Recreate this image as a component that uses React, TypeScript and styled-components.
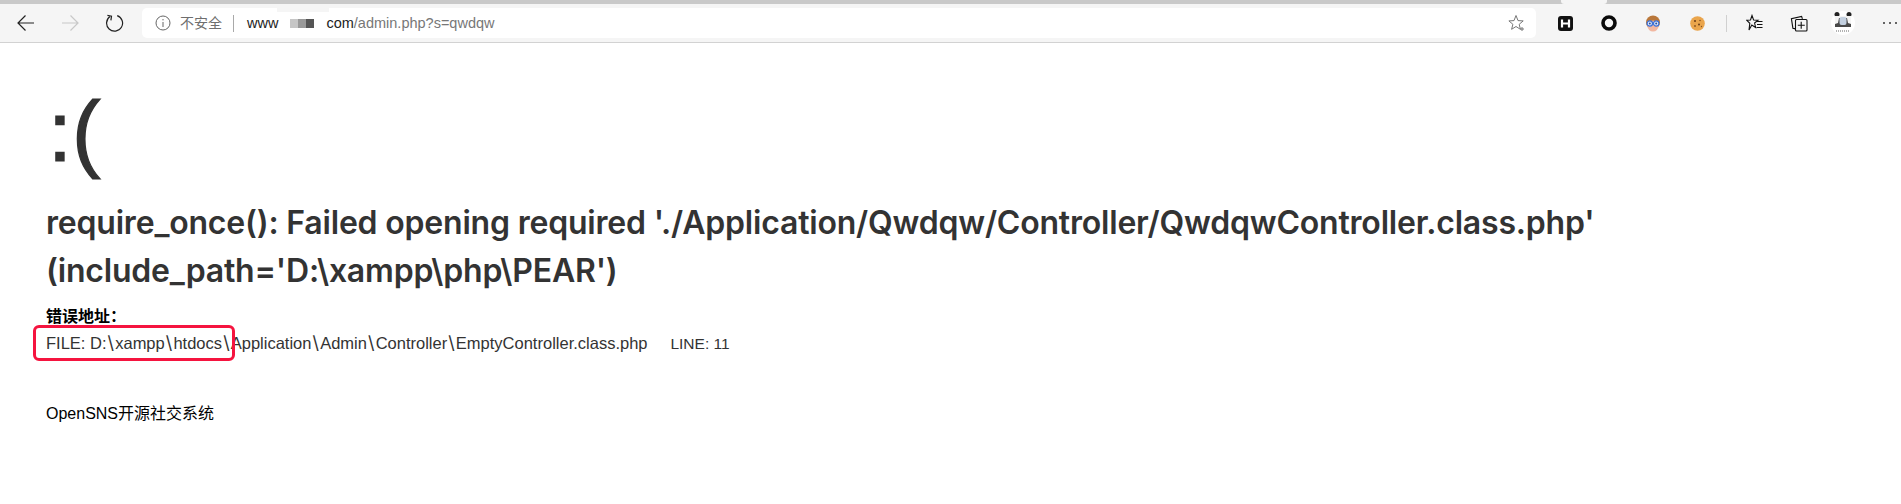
import React from 'react';
import styled, { createGlobalStyle } from 'styled-components';

const Global = createGlobalStyle`
  html, body { margin: 0; padding: 0; background: #fff; }
  body { font-family: "Liberation Sans", "Noto Sans CJK SC", sans-serif; color: #333; overflow: hidden; }
`;
const Page = styled.div`position: relative; width: 1901px; height: 504px; overflow: hidden;`;
const TabStrip = styled.div`height: 4px; background: #c9c9c9; display: flex; padding-left: 1561px;`;
const ActiveTabEdge = styled.div`width: 46px; background: #f5f5f5; border-radius: 0 0 3px 3px;`;
const Toolbar = styled.div`
  height: 39px; box-sizing: border-box; background: #f5f5f5; border-bottom: 1px solid #d2d2d2;
  display: flex; align-items: center; padding-left: 15px;
`;
const NavIcon = styled.button<{ $mr?: number }>`
  width: 22px; height: 22px; padding: 0; border: 0; background: none; display: flex; align-items: center; justify-content: center;
  margin-right: ${p => p.$mr ?? 0}px; flex: none;
`;
const AddressBar = styled.div`
  position: relative; width: 1394px; height: 30px; margin-left: 17px; background: #fff; border-radius: 5px;
  display: flex; align-items: center; padding-left: 13px; box-sizing: border-box; flex: none;
  font-size: 15px;
`;
const Insecure = styled.span`margin-left: 9px; color: #6e6e6e; font-size: 14px; line-height: 20px;`;
const Sep = styled.span`width: 1px; height: 17px; background: #a9a9a9; margin: 0 13px 0 11px; flex: none;`;
const Host = styled.span`color: #222; font-size: 14.5px;`;
const Redact = styled.span`display: flex; width: 43px; margin-right: 5px; padding-left: 12px; box-sizing: border-box;`;
const Pixel = styled.i<{ $c: string }>`width: 8px; height: 9px; background: ${p => p.$c}; display: block;`;
const Path = styled.span`color: #777; font-size: 14.5px;`;
const Notch = styled.span`position: absolute; left: 135px; top: 0; width: 52px; height: 4px; background: #f5f5f5;`;
const StarSlot = styled.span`margin-left: auto; margin-right: 10px; display: flex;`;
const Extensions = styled.div`display: flex; align-items: center; flex: none; margin-left: 7px;`;
const ExtSlot = styled.span<{ $w?: number }>`width: ${p => p.$w ?? 44}px; height: 28px; display: flex; align-items: center; justify-content: center; flex: none;`;
const ToolSep = styled.span`width: 1px; height: 17px; background: #d0d0d0; margin: 0 6px 0 7px; flex: none;`;
const ErrorBox = styled.div`padding: 23px 46px 24px;`;
const Face = styled.p`
  margin: 0 0 8px; padding: 5px 0 0 2px; font-size: 86px; line-height: 120px; font-weight: 400; color: #333;
  -webkit-text-stroke: 1.2px #333;
`;
const Heading = styled.h1`margin: 0; font-family: Inter, "Liberation Sans", sans-serif; font-size: 32px; line-height: 48px; font-weight: 600; color: #333; width: 1600px; letter-spacing: -0.2px;`;
const Content = styled.div`padding-top: 10px;`;
const Title = styled.h3`margin: 0 0 2px; font-size: 16px; line-height: 24px; font-weight: 700; color: #000;`;
const Text = styled.p`margin: 0; font-size: 16.5px; line-height: 24px; color: #333; white-space: pre;`;
const Slash = styled.span`font-family: Inter, sans-serif; font-size: 18px; padding: 0 1.1px;`;
const LineNo = styled.span`font-size: 15.5px;`;
const Copyright = styled.div`padding: 46px 46px; font-size: 16px; line-height: 24px; color: #000; margin-top: -24px;`;
const Annotation = styled.div`
  position: absolute; left: 33px; top: 325px; width: 202px; height: 36px; box-sizing: border-box;
  border: 3px solid #f5143f; border-radius: 6px;
`;

const FilePath = ({ parts }: { parts: string[] }) => (
  <>{parts.map((p, i) => <React.Fragment key={i}>{i > 0 && <Slash>\</Slash>}{p}</React.Fragment>)}</>
);

const Back = () => <svg width="20" height="20" viewBox="0 0 20 20" fill="none" stroke="#222" strokeWidth="1.2"><path d="M18 10H2M9.5 2.500 2 10l7.500 7.500" /></svg>;
const Forward = () => <svg width="20" height="20" viewBox="0 0 20 20" fill="none" stroke="#c8c8c8" strokeWidth="1.2"><path d="M2 10h16M10.500 2.500 18 10l-7.500 7.500" /></svg>;
const Reload = () => <svg width="20" height="20" viewBox="0 0 20 20" fill="none" stroke="#222" strokeWidth="1.2"><path d="M6 3.600A8 8 0 1 0 13.200 2.600" /><path d="M2.400 2.400 6.500 3.200 5.900 7.400" transform="translate(1 0)" /></svg>;
const Info = () => <svg width="16" height="16" viewBox="0 0 16 16" fill="none" stroke="#666" strokeWidth="1"><circle cx="8" cy="8" r="7" /><path d="M8 7v5M8 4v1.400" /></svg>;
const Star = () => <svg width="18" height="18" viewBox="0 0 18 18" fill="none" stroke="#777" strokeWidth="1"><path d="M8 1.500 10 6.600l5.200.3-4 3.400 1.200 5-4.400-2.800L3.600 15.300l1.300-5-4-3.400 5.100-.3z" /><path d="M14 13v4M12 15h4" /></svg>;
const HIcon = () => <svg width="15" height="15" viewBox="0 0 15 15"><rect width="15" height="15" rx="3" fill="#111" /><path d="M4 3.500v8M11 3.500v8M4 7.500h7" stroke="#fff" strokeWidth="2.200" /></svg>;
const Ring = () => <svg width="16" height="16" viewBox="0 0 16 16" fill="none" stroke="#0a0a0a" strokeWidth="3.600"><circle cx="8" cy="8" r="6" /></svg>;
const Nerd = () => <svg width="16" height="17" viewBox="0 0 16 17"><circle cx="8" cy="7.500" r="7" fill="#b9773a" /><ellipse cx="8" cy="11" rx="5.500" ry="5.500" fill="#f2b7a0" /><circle cx="4.800" cy="8.500" r="2.700" fill="#dfe9fb" stroke="#3a70d8" strokeWidth="1.200" /><circle cx="11.200" cy="8.500" r="2.700" fill="#dfe9fb" stroke="#3a70d8" strokeWidth="1.200" /><circle cx="4.800" cy="8.500" r="1" fill="#2c4f96" /><circle cx="11.200" cy="8.500" r="1" fill="#2c4f96" /></svg>;
const Cookie = () => <svg width="15" height="15" viewBox="0 0 15 15"><circle cx="7.500" cy="7.500" r="7.300" fill="#eaa54c" /><circle cx="5" cy="5" r="1" fill="#6b3d16" /><circle cx="10" cy="4.500" r=".8" fill="#8a5320" /><circle cx="9" cy="8.500" r="1" fill="#6b3d16" /><circle cx="5" cy="10" r=".9" fill="#8a5320" /><circle cx="11.500" cy="10.500" r=".7" fill="#8a5320" /></svg>;
const Favorites = () => <svg width="18" height="18" viewBox="0 0 18 18" fill="none" stroke="#111" strokeWidth="1.100"><path d="M6 1.500 7.600 6 12 6.200 8.600 9 9.600 13.500 5.800 11 3 16 3.800 9.300.8 6.300 4.500 6z" /><path d="M11 7.500h5.500M11 10.500h5.500M10.500 13.500h6" /></svg>;
const Collections = () => <svg width="18" height="18" viewBox="0 0 18 18" fill="none" stroke="#111" strokeWidth="1.100"><path d="M5 15.500 2.300 14.800.8 5.300 11 3l.8 2.500" transform="translate(.6 -.6)" /><rect x="5.500" y="5.500" width="11.500" height="11.500" rx="1" /><path d="M11.200 7.800v7M7.800 11.300h7" /></svg>;
const Panda = () => <svg width="24" height="24" viewBox="0 0 24 24"><circle cx="12" cy="12" r="12" fill="#fff" /><circle cx="6" cy="3.500" r="2.500" fill="#222" /><circle cx="18" cy="3.500" r="2.500" fill="#222" /><path d="M4 5h16v11H4z" fill="#f4f4f4" /><path d="M4 16h16v-3l-3-1-1-5H8l-1 5-3 1z" fill="#2a2a2a" opacity=".85" /><rect x="8.500" y="6" width="7" height="8" rx="2" fill="#c3d0e0" /><path d="M5 20h14" stroke="#666" strokeWidth="1" strokeDasharray="1 1" /></svg>;
const More = () => <svg width="16" height="4" viewBox="0 0 16 4" fill="#333"><circle cx="2" cy="2" r="1" /><circle cx="8" cy="2" r="1" /><circle cx="14" cy="2" r="1" /></svg>;

export default function App() {
  return (
    <Page>
      <Global />
      <TabStrip><ActiveTabEdge /></TabStrip>
      <Toolbar>
        <NavIcon $mr={22}><Back /></NavIcon>
        <NavIcon $mr={22}><Forward /></NavIcon>
        <NavIcon><Reload /></NavIcon>
        <AddressBar>
          <Notch />
          <Info />
          <Insecure>不安全</Insecure>
          <Sep />
          <Host>www</Host>
          <Redact><Pixel $c="#c6c6c6" /><Pixel $c="#999" /><Pixel $c="#555" /></Redact>
          <Host>com</Host>
          <Path>/admin.php?s=qwdqw</Path>
          <StarSlot><Star /></StarSlot>
        </AddressBar>
        <Extensions>
          <ExtSlot><HIcon /></ExtSlot>
          <ExtSlot><Ring /></ExtSlot>
          <ExtSlot><Nerd /></ExtSlot>
          <ExtSlot><Cookie /></ExtSlot>
          <ToolSep />
          <ExtSlot><Favorites /></ExtSlot>
          <ExtSlot><Collections /></ExtSlot>
          <ExtSlot><Panda /></ExtSlot>
          <ExtSlot $w={50}><More /></ExtSlot>
        </Extensions>
      </Toolbar>
      <ErrorBox>
        <Face>:(</Face>
        <Heading>require_once(): Failed opening required './Application/Qwdqw/Controller/QwdqwController.class.php' (include_path='D:\xampp\php\PEAR')</Heading>
        <Content>
          <Title>错误地址：</Title>
          <Text><FilePath parts={['FILE: D:', 'xampp', 'htdocs', 'Application', 'Admin', 'Controller', 'EmptyController.class.php \u00a0\u00a0\u00a0\u00a0']} /><LineNo>LINE: 11</LineNo></Text>
        </Content>
      </ErrorBox>
      <Copyright>OpenSNS开源社交系统</Copyright>
      <Annotation />
    </Page>
  );
}
